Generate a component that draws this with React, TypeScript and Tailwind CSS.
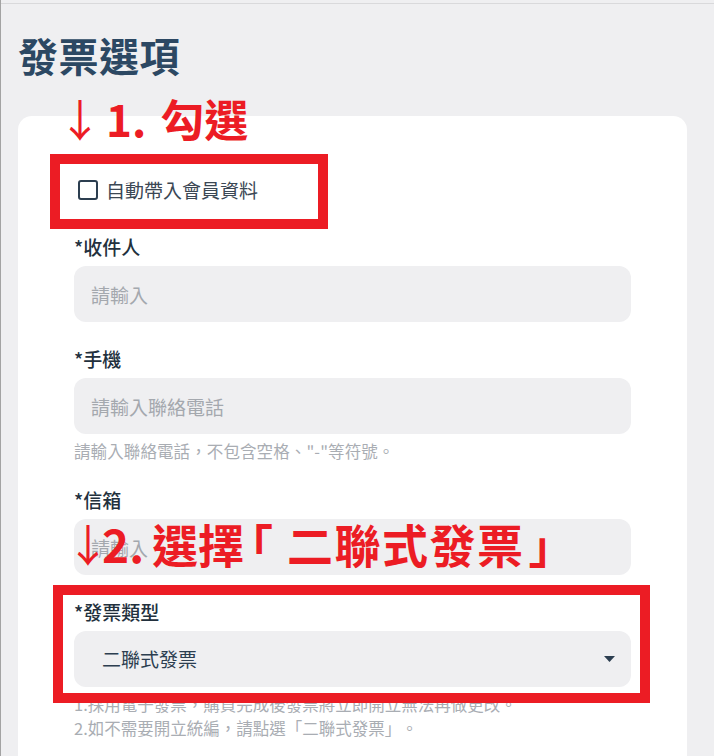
import React from 'react';

const FONT = { fontFamily: '"Noto Sans CJK TC", "Noto Sans", sans-serif' };

interface FieldProps {
  label: string;
  placeholder: string;
  help?: string;
}

function TextField({ label, placeholder, help }: FieldProps) {
  return (
    <div className="mb-6">
      <label className="block text-[19px] leading-[26px] font-medium text-[#22303d] mb-[6px]">
        {label}
      </label>
      <input
        type="text"
        placeholder={placeholder}
        className="w-full h-14 rounded-xl bg-[#efeff1] pl-[17px] pr-4 text-[19px] text-[#22303d] placeholder:text-[#a4a8ae] outline-none"
      />
      {help && (
        <p className="mt-[5px] text-[16.5px] leading-[24px] text-[#a9adb3] tracking-[0.1px]">{help}</p>
      )}
    </div>
  );
}

export default function App() {
  return (
    <div
      className="relative min-h-screen bg-[#efeff1] border-l border-[#a3a3a3] pt-[3px] overflow-hidden [text-spacing-trim:space-all]"
      style={FONT}
    >
      <div className="border-t border-[#d9d9db] pl-[17px] pr-[27px] pt-[27px]">
        <h1 className="text-[40px] leading-[48px] font-bold text-[#2c4863] tracking-[0.5px]">發票選項</h1>

        <div className="mt-[37px] bg-white rounded-t-[14px] px-14 pt-[61px] pb-10">
          {/* Auto-fill */}
          <label className="flex items-center h-[26px] mb-[31px] cursor-pointer">
            <span className="ml-[4px] w-5 h-5 rounded-[3px] border-[2.5px] border-[#2c3e50] bg-white" />
            <span className="ml-[8px] text-[19px] text-[#3b4754]">自動帶入會員資料</span>
          </label>

          <TextField label="*收件人" placeholder="請輸入" />
          <TextField
            label="*手機"
            placeholder="請輸入聯絡電話"
            help={'請輸入聯絡電話，不包含空格、"-"等符號。'}
          />
          <TextField label="*信箱" placeholder="請輸入" />

          {/* Invoice type */}
          <div>
            <label className="block text-[19px] leading-[26px] font-medium text-[#22303d] mb-[6px]">
              *發票類型
            </label>
            <div className="relative">
              <select
                defaultValue="two"
                className="appearance-none w-full h-14 rounded-xl bg-[#efeff1] pl-[28px] pr-12 text-[19px] text-[#2c3e50] outline-none"
              >
                <option value="two">二聯式發票</option>
                <option value="three">三聯式發票</option>
              </select>
              <svg
                className="absolute right-[16px] top-1/2 -translate-y-1/2 pointer-events-none"
                width="11"
                height="6"
                viewBox="0 0 11 6"
              >
                <path d="M0 0h11L5.5 6z" fill="#2c3e50" />
              </svg>
            </div>
            <div className="mt-[5px] text-[16.5px] leading-[24px] text-[#a9adb3]">
              <p>1.採用電子發票，購買完成後發票將立即開立無法再做更改。</p>
              <p>2.如不需要開立統編，請點選「二聯式發票」。</p>
            </div>
          </div>
        </div>
      </div>

      {/* Annotations */}
      <div className="absolute left-[49px] top-[154px] w-[278px] h-[75px] border-[10px] border-[#ec1c24]" />
      <div className="absolute left-[52px] top-[585px] w-[597px] h-[118px] border-[10px] border-[#ec1c24]" />

      <div className="absolute left-[57px] top-[96px] flex items-center text-[44px] leading-[44px] font-bold text-[#ec1c24]">
        <span className="font-normal">↓</span>
        <span className="ml-[4px]">1.</span>
        <span className="ml-[14px]">勾選</span>
      </div>
      <div className="absolute left-[65px] top-[520px] flex items-center text-[46px] leading-[46px] font-bold text-[#ec1c24]">
        <span className="text-[44px] font-normal">↓</span>
        <span className="-ml-[8px]">2.</span>
        <span className="ml-[8px]">選擇</span>
        <span className="-ml-[17px] mr-[14px]">「</span>
        <span className="tracking-[1.5px]">二聯式發票</span>
        <span className="ml-[4px]">」</span>
      </div>
    </div>
  );
}
